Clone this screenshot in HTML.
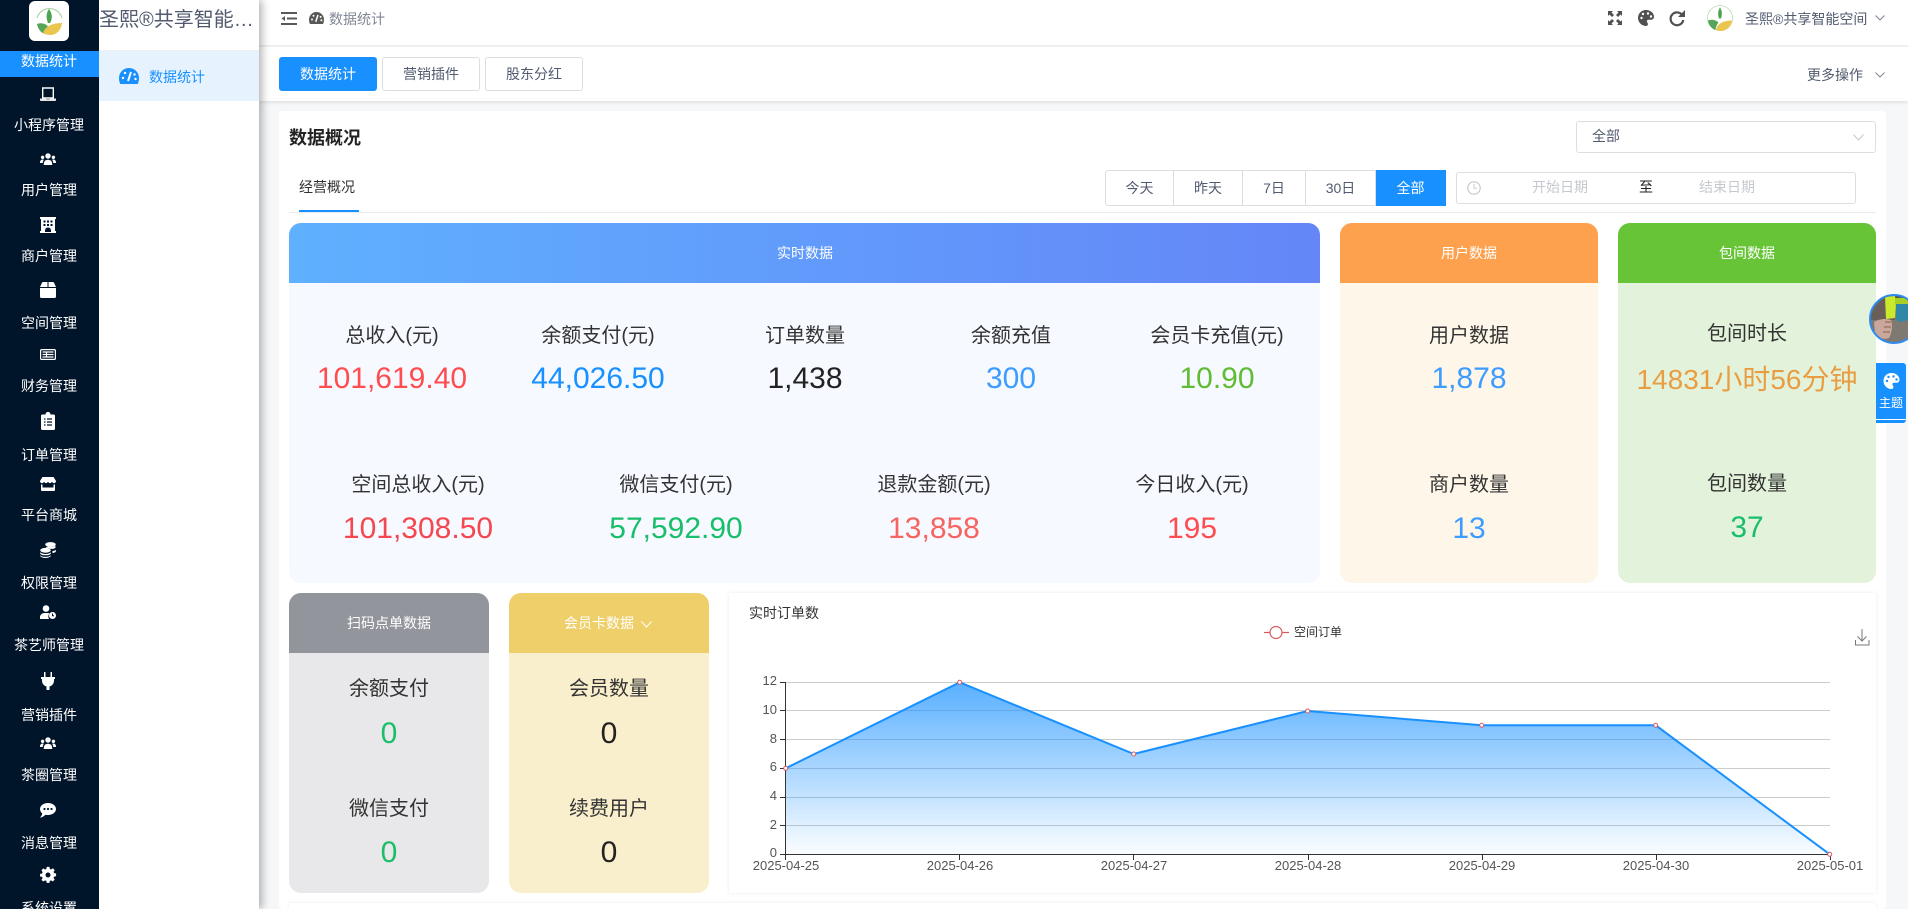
<!DOCTYPE html>
<html lang="zh-CN"><head><meta charset="utf-8"><title>数据统计</title>
<style>
*{box-sizing:border-box}
html,body{margin:0;padding:0;width:1908px;height:909px;overflow:hidden;background:#f5f7f9;font-family:"Liberation Sans","Noto Sans CJK SC",sans-serif;color:#333}
#w{position:relative;width:1908px;height:909px;overflow:hidden;contain:paint}
.a{position:absolute}
.c{position:absolute;width:400px;margin-left:-200px;height:50px;margin-top:-25px;line-height:50px;text-align:center;white-space:nowrap}
.l{font-size:20px;color:#333}
.v{font-size:30px}
.s{font-size:14px;color:#fff}
.h{font-size:14px;color:#fff}
svg{position:absolute;display:block;overflow:visible}
.card{position:absolute;border-radius:12px;overflow:hidden}
.card>div{position:absolute;left:0;top:0;width:100%;height:60px}
.btn{position:absolute;top:57px;height:34px;width:98px;line-height:32px;text-align:center;font-size:14px;border:1px solid #dcdee2;border-radius:3px;background:#fff;color:#515a6e}
.g{position:absolute;top:170px;height:36px;line-height:34px;text-align:center;font-size:14px;border:1px solid #dcdee2;border-left:0;color:#515a6e;background:#fff}
</style></head><body><div id="w">

<!-- main content -->
<div class="a" style="left:259px;top:0;width:1649px;height:46px;background:#fff;border-bottom:1px solid #f0f0f0"></div>
<div class="a" style="left:259px;top:47px;width:1649px;height:54px;background:#fff;box-shadow:0 1px 4px rgba(0,0,0,.12)"></div>
<div class="a" style="left:279px;top:111px;width:1607px;height:798px;background:#fff;border-radius:4px"></div>

<!-- secondary sidebar -->
<div class="a" style="left:99px;top:0;width:160px;height:909px;background:#fff;box-shadow:3px 0 8px rgba(0,0,0,.3)"></div>
<div class="a" style="left:99px;top:50px;width:160px;height:1px;background:#eee"></div>
<div class="a" style="left:99px;top:51px;width:160px;height:50px;background:#e6f3ff"></div>
<div class="a" style="left:99px;top:0;width:160px;height:50px;line-height:41px;font-size:20px;color:#515a6e;white-space:nowrap;overflow:hidden;text-overflow:ellipsis">圣熙®共享智能空间</div>
<svg style="left:119px;top:68px" width="20" height="16" viewBox="0 0 20 16"><path fill="#1890ff" d="M10 0A10 10 0 0 0 0 10c0 2.200.4 4.200 1.300 6h17.400c.9-1.800 1.300-3.800 1.300-6A10 10 0 0 0 10 0z"/><path stroke="#fff" stroke-width="2" d="M9 13l3-9"/><circle cx="4" cy="10" r="1.200" fill="#fff"/><circle cx="6" cy="5" r="1.200" fill="#fff"/><circle cx="15.500" cy="6.500" r="1.200" fill="#fff"/><circle cx="16.500" cy="11" r="1.200" fill="#fff"/></svg>
<div class="a" style="left:149px;top:67px;height:20px;line-height:20px;font-size:14px;color:#1890ff">数据统计</div>

<!-- primary sidebar -->
<div class="a" style="left:0;top:0;width:99px;height:909px;background:#00142a"></div>
<div class="a" style="left:29px;top:1px;width:40px;height:40px;background:#fff;border-radius:6px"></div>
<svg style="left:29px;top:1px" width="40" height="40" viewBox="0 0 40 40"><path d="M8 17a13 13 0 0 1 25 0" fill="none" stroke="#9ed19a" stroke-width="1"/><path d="M20 8c3 4 4 9 1 14h-2c-2-5-2-10 1-14z" fill="#4ba54f"/><path d="M8 23c5-2 10 0 12 4-2 2-3 4-4 6-4-1-7-5-8-10z" fill="#57a55a"/><path d="M14 32c2-7 10-10 19-10-1 8-6 12-12 12-3 0-5-1-7-2z" fill="#eac64f"/></svg>
<div class="a" style="left:0;top:51px;width:99px;height:26px;background:#1890ff"></div>

<div class="c s" style="left:49px;top:61px">数据统计</div>
<div class="c s" style="left:49px;top:125px">小程序管理</div>
<div class="c s" style="left:49px;top:190px">用户管理</div>
<div class="c s" style="left:49px;top:256px">商户管理</div>
<div class="c s" style="left:49px;top:323px">空间管理</div>
<div class="c s" style="left:49px;top:386px">财务管理</div>
<div class="c s" style="left:49px;top:455px">订单管理</div>
<div class="c s" style="left:49px;top:515px">平台商城</div>
<div class="c s" style="left:49px;top:583px">权限管理</div>
<div class="c s" style="left:49px;top:645px">茶艺师管理</div>
<div class="c s" style="left:49px;top:715px">营销插件</div>
<div class="c s" style="left:49px;top:775px">茶圈管理</div>
<div class="c s" style="left:49px;top:843px">消息管理</div>
<div class="c s" style="left:49px;top:908px">系统设置</div>

<!-- sidebar icons -->
<svg style="left:40px;top:87px" width="16" height="14" viewBox="0 0 16 14"><path d="M2.700 1h10.600v10H2.700z" fill="none" stroke="#fff" stroke-width="1.400"/><path d="M0 11.500h6l.6.8h2.800l.6-.8h6V13a1 1 0 0 1-1 1H1a1 1 0 0 1-1-1z" fill="#e6e6e6"/></svg>
<svg style="left:40px;top:153px" width="16" height="12" viewBox="0 0 16 12" fill="#fff"><circle cx="8" cy="3" r="2.700"/><path d="M3.800 12c-.3-3.600 1.400-5.300 4.200-5.300s4.500 1.700 4.200 5.300z"/><circle cx="2.600" cy="4.300" r="1.700"/><circle cx="13.400" cy="4.300" r="1.700"/><path d="M0 10c-.1-2 .8-3.500 2.600-3.500.6 0 1 .1 1.300.4C3 7.800 2.700 8.800 2.700 10zM16 10c.1-2-.8-3.500-2.600-3.500-.6 0-1 .1-1.300.4.900.9 1.200 1.900 1.200 3.100z"/></svg>
<svg style="left:40px;top:217px" width="16" height="16" viewBox="0 0 16 16"><path fill="#fff" d="M0 0h16v2h-1v12h1v2H0v-2h1V2H0z"/><path fill="#00142a" d="M3.500 3.500h2v2h-2zM7 3.500h2v2H7zM10.500 3.500h2v2h-2zM3.500 7h2v2h-2zM10.500 7h2v2h-2zM7 7h2v2H7zM5 14c0-2 1-3.500 3-3.500s3 1.500 3 3.500v1H5z"/></svg>
<svg style="left:40px;top:282px" width="16" height="16" viewBox="0 0 16 16" fill="#fff"><path d="M3.500 0h4v5H0L1.700 1.200C2 .4 2.700 0 3.500 0zM8.500 0h4c.8 0 1.500.4 1.800 1.200L16 5H8.500zM0 6h16v8.500a1.500 1.500 0 0 1-1.500 1.500h-13A1.500 1.500 0 0 1 0 14.500z"/></svg>
<svg style="left:40px;top:349px" width="16" height="11" viewBox="0 0 16 11"><rect x=".6" y=".6" width="14.800" height="9.800" rx="1.200" fill="#00142a" stroke="#fff" stroke-width="1.200"/><path d="M2.500 3h11M2.500 5.500h11M2.500 8h11M6.500 3v5" stroke="#fff" stroke-width="1.200" fill="none"/></svg>
<svg style="left:41px;top:412px" width="14" height="18" viewBox="0 0 14 18"><path fill="#fff" d="M1.500 2.500H4.500C4.500 1 5.500 0 7 0s2.500 1 2.500 2.500h3A1.500 1.500 0 0 1 14 4v12.500a1.500 1.500 0 0 1-1.500 1.500h-11A1.500 1.500 0 0 1 0 16.500V4a1.500 1.500 0 0 1 1.500-1.500z"/><path stroke="#00142a" stroke-width="1.300" d="M3 7h1.500M6 7h5M3 10h1.500M6 10h5M3 13h1.500M6 13h5"/></svg>
<svg style="left:40px;top:477px" width="16" height="14" viewBox="0 0 16 14" fill="#fff"><path d="M2.500 0h11L16 4c0 1.300-1 2.200-2 2.200S12.500 5.500 12 4.800c-.5.700-1.200 1.400-2 1.400S8.500 5.500 8 4.800c-.5.700-1.200 1.400-2 1.400S4.500 5.500 4 4.800C3.500 5.500 3 6.200 2 6.200S0 5.300 0 4z"/><path d="M1 7.500h1.500v3h11v-3H15V13a1 1 0 0 1-1 1H2a1 1 0 0 1-1-1z"/></svg>
<svg style="left:40px;top:542px" width="16" height="16" viewBox="0 0 16 16" fill="#fff"><ellipse cx="10.500" cy="2.500" rx="5.300" ry="2.400"/><path d="M5.500 5.500c1-.6 2.500-1 4-.8 2 .2 4 .2 6-1v2c-1 1-3 1.300-5 1.200-1.500-.7-3.500-1-5-1.400zM12.500 9c1.500-.2 2.500-.6 3.300-1.300v2C15 10.500 14 10.800 12.500 11z"/><ellipse cx="5.500" cy="8.300" rx="5.300" ry="2.400"/><path d="M.2 10.300c1 1.200 3 1.700 5.300 1.700s4.300-.5 5.300-1.700v1.400c-1 1.100-3 1.600-5.300 1.600S1.200 12.800.2 11.700zM.2 13.300c1 1.100 3 1.600 5.300 1.600s4.300-.5 5.300-1.600v.8c-1 1.200-3 1.900-5.300 1.900S1.200 15.300.2 14.100z"/></svg>
<svg style="left:40px;top:605px" width="16" height="14" viewBox="0 0 16 14"><circle cx="6" cy="3.500" r="3.300" fill="#fff"/><path d="M0 14v-1.800C0 9.800 2 8 4.300 8h3.400c.7 0 1.300.1 1.800.4A5 5 0 0 0 9 14z" fill="#fff"/><circle cx="12.500" cy="10.500" r="3.500" fill="#fff"/><path d="M12.500 8.500v2.200h1.500" stroke="#00142a" fill="none"/></svg>
<svg style="left:41px;top:672px" width="14" height="18" viewBox="0 0 14 18" fill="#fff"><path d="M3 0h1.500v5H3zM9.500 0H11v5H9.500zM0 5h14v2h-1v2a6 6 0 0 1-4.500 5.500V18h-3v-3.500A6 6 0 0 1 1 9V7H0z"/></svg>
<svg style="left:40px;top:737px" width="16" height="12" viewBox="0 0 16 12" fill="#fff"><circle cx="8" cy="3" r="2.700"/><path d="M3.800 12c-.3-3.600 1.400-5.300 4.200-5.300s4.500 1.700 4.200 5.300z"/><circle cx="2.600" cy="4.300" r="1.700"/><circle cx="13.400" cy="4.300" r="1.700"/><path d="M0 10c-.1-2 .8-3.500 2.600-3.500.6 0 1 .1 1.300.4C3 7.800 2.700 8.800 2.700 10zM16 10c.1-2-.8-3.500-2.600-3.500-.6 0-1 .1-1.300.4.900.9 1.200 1.900 1.200 3.100z"/></svg>
<svg style="left:40px;top:803px" width="16" height="15" viewBox="0 0 16 15"><path fill="#fff" d="M8 0c4.400 0 8 2.700 8 6s-3.600 6-8 6c-.9 0-1.800-.1-2.600-.3C4.300 12.700 2.500 14.500 0 14.500c1-1 2-2.300 2.300-4C.9 9.400 0 7.800 0 6c0-3.300 3.600-6 8-6z"/><circle cx="4.500" cy="6" r="1.100" fill="#00142a"/><circle cx="8" cy="6" r="1.100" fill="#00142a"/><circle cx="11.500" cy="6" r="1.100" fill="#00142a"/></svg>
<svg style="left:40px;top:867px" width="16" height="16" viewBox="0 0 16 16"><path fill="#fff" d="M6.500 0h3l.4 2.200 1.400.6 1.900-1.300 2.100 2.100-1.300 1.900.6 1.400 2.200.4v3l-2.200.4-.6 1.400 1.300 1.900-2.100 2.100-1.900-1.300-1.400.6-.4 2.200h-3l-.4-2.200-1.400-.6-1.900 1.300L.7 14.300 2 12.400l-.6-1.400L-.8 10.600v-3l2.200-.4.600-1.400L.7 3.700l2.100-2.100 1.900 1.300 1.400-.6z" transform="translate(.8 -.1) scale(.91)"/><circle cx="8" cy="8" r="2.500" fill="#00142a"/></svg>

<!-- header -->
<svg style="left:281px;top:12px" width="16" height="13" viewBox="0 0 16 13" fill="#595959"><path d="M0 0h16v2H0zM6 5.500h10v2H6zM0 11h16v2H0zM4 4v5L.5 6.500z"/></svg>
<svg style="left:309px;top:12px" width="15" height="12" viewBox="0 0 20 16"><path fill="#595959" d="M10 0A10 10 0 0 0 0 10c0 2.200.4 4.200 1.300 6h17.400c.9-1.800 1.300-3.800 1.300-6A10 10 0 0 0 10 0z"/><path stroke="#fff" stroke-width="2" d="M9 13l3-9"/><circle cx="4" cy="10" r="1.300" fill="#fff"/><circle cx="6" cy="5" r="1.300" fill="#fff"/><circle cx="15.500" cy="6.500" r="1.300" fill="#fff"/><circle cx="16.500" cy="11" r="1.300" fill="#fff"/></svg>
<div class="a" style="left:329px;top:9px;line-height:20px;font-size:14px;color:#808695">数据统计</div>

<svg style="left:1608px;top:11px" width="14" height="14" viewBox="0 0 14 14"><path fill="#515151" d="M0 0h5L3.500 1.500 6 4 4 6 1.500 3.500 0 5zM14 0v5l-1.500-1.500L10 6 8 4l2.500-2.500L9 0zM0 14V9l1.500 1.500L4 8l2 2-2.500 2.500L5 14zM14 14H9l1.500-1.500L8 10l2-2 2.500 2.500L14 9z"/></svg>
<svg style="left:1638px;top:10px" width="16" height="16" viewBox="0 0 16 16"><path fill="#515151" d="M8 0C3.600 0 0 3.400 0 7.800 0 12.300 3.500 16 7.900 16c1.300 0 2-.9 2-1.900 0-1.300-1-1.700-1-2.800 0-1 .8-1.500 1.800-1.500h2.300C14.800 9.800 16 8.600 16 6.900 16 3 12.400 0 8 0z"/><circle cx="3.500" cy="8" r="1.200" fill="#fff"/><circle cx="5" cy="4" r="1.200" fill="#fff"/><circle cx="10" cy="3.500" r="1.200" fill="#fff"/><circle cx="13" cy="6.500" r="1.200" fill="#fff"/></svg>
<svg style="left:1669px;top:10px" width="16" height="16" viewBox="0 0 16 16"><path fill="none" stroke="#515151" stroke-width="2.200" d="M13.300 5.200A6.400 6.400 0 1 0 14.300 10"/><path fill="#515151" d="M16 0v7H9z"/></svg>
<svg style="left:1707px;top:5px" width="26" height="26" viewBox="0 0 26 26"><circle cx="13" cy="13" r="12.500" fill="#fff" stroke="#b9ddb4" stroke-width=".8"/><path d="M13 2.500c2 3 2.500 6.500 1 11h-2c-1.500-4-1-8 1-11z" fill="#4ba54f"/><path d="M1 15.500c4-1.500 8-.5 10.500 2-1.500 2-2.500 4-3 7.500C4.500 23.500 1.500 20 1 15.500z" fill="#57a55a"/><path d="M9 25c1-6 7-9.500 16-9.500C24.500 22 19 26 13.500 26 12 26 10.500 25.700 9 25z" fill="#eac64f"/></svg>
<div class="a" style="left:1745px;top:9px;line-height:20px;font-size:14px;color:#515a6e;white-space:nowrap">圣熙®共享智能空间</div>
<svg style="left:1875px;top:15px" width="10" height="6" viewBox="0 0 10 6"><path d="M.5.500L5 5 9.500.5" fill="none" stroke="#808695"/></svg>

<!-- tabs -->
<div class="btn" style="left:279px;background:#1890ff;color:#fff;border-color:#1890ff">数据统计</div>
<div class="btn" style="left:382px">营销插件</div>
<div class="btn" style="left:485px">股东分红</div>
<div class="a" style="left:1807px;top:65px;line-height:20px;font-size:14px;color:#515a6e">更多操作</div>
<svg style="left:1875px;top:72px" width="10" height="6" viewBox="0 0 10 6"><path d="M.5.500L5 5 9.500.5" fill="none" stroke="#808695"/></svg>

<!-- overview -->
<div class="a" style="left:289px;top:125px;line-height:26px;font-size:18px;font-weight:700;color:#222">数据概况</div>
<div class="a" style="left:1576px;top:121px;width:300px;height:32px;border:1px solid #dcdee2;border-radius:3px;background:#fff"></div>
<div class="a" style="left:1592px;top:126px;line-height:20px;font-size:14px;color:#515a6e">全部</div>
<svg style="left:1853px;top:134px" width="11" height="7" viewBox="0 0 11 7"><path d="M.5.500L5.500 6 10.500.5" fill="none" stroke="#c5c8ce"/></svg>

<div class="a" style="left:299px;top:177px;line-height:20px;font-size:14px;color:#333">经营概况</div>
<div class="a" style="left:289px;top:212px;width:1587px;height:1px;background:#e8eaec"></div>
<div class="a" style="left:299px;top:210px;width:60px;height:2px;background:#1890ff"></div>

<div class="g" style="left:1105px;width:69px;border-left:1px solid #dcdee2;border-radius:3px 0 0 3px">今天</div>
<div class="g" style="left:1174px;width:69px">昨天</div>
<div class="g" style="left:1243px;width:63px">7日</div>
<div class="g" style="left:1306px;width:70px">30日</div>
<div class="g" style="left:1376px;width:70px;background:#1890ff;color:#fff;border-color:#1890ff">全部</div>

<div class="a" style="left:1456px;top:172px;width:400px;height:32px;border:1px solid #dcdee2;border-radius:3px;background:#fff"></div>
<svg style="left:1467px;top:181px" width="14" height="14" viewBox="0 0 14 14"><circle cx="7" cy="7" r="6.200" fill="none" stroke="#c5c8ce" stroke-width="1.200"/><path d="M7 3v4.300h3" fill="none" stroke="#c5c8ce"/></svg>
<div class="c" style="left:1560px;top:187px;font-size:14px;color:#c5c8ce">开始日期</div>
<div class="c" style="left:1646px;top:187px;font-size:14px;color:#222">至</div>
<div class="c" style="left:1727px;top:187px;font-size:14px;color:#c5c8ce">结束日期</div>

<!-- cards -->
<div class="card" style="left:289px;top:223px;width:1031px;height:360px;background:#f6f9ff"><div style="background:linear-gradient(90deg,#5fb0ff,#6486f7)"></div></div>
<div class="card" style="left:1340px;top:223px;width:258px;height:360px;background:#fef6e8"><div style="background:#fea14e"></div></div>
<div class="card" style="left:1618px;top:223px;width:258px;height:360px;background:#e3f3db"><div style="background:#67c437"></div></div>
<div class="card" style="left:289px;top:593px;width:200px;height:300px;background:#e8e8ea"><div style="background:#93959c"></div></div>
<div class="card" style="left:509px;top:593px;width:200px;height:300px;background:#faefcc"><div style="background:#eecf6a"></div></div>

<div class="c h" style="left:805px;top:253px">实时数据</div>
<div class="c h" style="left:1469px;top:253px">用户数据</div>
<div class="c h" style="left:1747px;top:253px">包间数据</div>
<div class="c h" style="left:389px;top:623px">扫码点单数据</div>
<div class="c h" style="left:599px;top:623px">会员卡数据</div>
<svg style="left:641px;top:621px" width="11" height="7" viewBox="0 0 11 7"><path d="M.5.500L5.500 6 10.500.5" fill="none" stroke="#fff"/></svg>

<div class="c l" style="left:392px;top:336px">总收入(元)</div>
<div class="c l" style="left:598px;top:336px">余额支付(元)</div>
<div class="c l" style="left:805px;top:336px">订单数量</div>
<div class="c l" style="left:1011px;top:336px">余额充值</div>
<div class="c l" style="left:1217px;top:336px">会员卡充值(元)</div>
<div class="c v" style="left:392px;top:379px;color:#ff4d4f">101,619.40</div>
<div class="c v" style="left:598px;top:379px;color:#1890ff">44,026.50</div>
<div class="c v" style="left:805px;top:379px;color:#222">1,438</div>
<div class="c v" style="left:1011px;top:379px;color:#3c9cff">300</div>
<div class="c v" style="left:1217px;top:379px;color:#5fbc33">10.90</div>

<div class="c l" style="left:418px;top:485px">空间总收入(元)</div>
<div class="c l" style="left:676px;top:485px">微信支付(元)</div>
<div class="c l" style="left:934px;top:485px">退款金额(元)</div>
<div class="c l" style="left:1192px;top:485px">今日收入(元)</div>
<div class="c v" style="left:418px;top:529px;color:#f5474f">101,308.50</div>
<div class="c v" style="left:676px;top:529px;color:#19be6b">57,592.90</div>
<div class="c v" style="left:934px;top:529px;color:#f76560">13,858</div>
<div class="c v" style="left:1192px;top:529px;color:#ff4d4f">195</div>

<div class="c l" style="left:1469px;top:336px">用户数据</div>
<div class="c v" style="left:1469px;top:379px;color:#3c9cff">1,878</div>
<div class="c l" style="left:1469px;top:485px">商户数量</div>
<div class="c v" style="left:1469px;top:529px;color:#3c9cff">13</div>

<div class="c l" style="left:1747px;top:334px">包间时长</div>
<div class="c" style="left:1747px;top:380px;font-size:28px;color:#e99d42">14831小时56分钟</div>
<div class="c l" style="left:1747px;top:484px">包间数量</div>
<div class="c v" style="left:1747px;top:528px;color:#19be6b">37</div>

<div class="c l" style="left:389px;top:689px">余额支付</div>
<div class="c v" style="left:389px;top:734px;color:#19be6b">0</div>
<div class="c l" style="left:389px;top:809px">微信支付</div>
<div class="c v" style="left:389px;top:853px;color:#19be6b">0</div>
<div class="c l" style="left:609px;top:689px">会员数量</div>
<div class="c v" style="left:609px;top:734px;color:#222">0</div>
<div class="c l" style="left:609px;top:809px">续费用户</div>
<div class="c v" style="left:609px;top:853px;color:#222">0</div>

<!-- chart card -->
<div class="a" style="left:729px;top:593px;width:1147px;height:300px;background:#fff;box-shadow:0 0 4px rgba(0,0,0,.08)"></div>
<div class="a" style="left:289px;top:903px;width:1587px;height:6px;background:#fff;box-shadow:0 0 4px rgba(0,0,0,.08)"></div>
<div class="a" style="left:749px;top:603px;line-height:20px;font-size:14px;color:#333">实时订单数</div>

<svg style="left:0;top:0;overflow:hidden" width="1908" height="909" viewBox="0 0 1908 909">
<defs><linearGradient id="ag" x1="0" y1="682" x2="0" y2="854" gradientUnits="userSpaceOnUse"><stop offset="0" stop-color="#1890ff" stop-opacity=".72"/><stop offset="1" stop-color="#1890ff" stop-opacity=".02"/></linearGradient></defs>
<g stroke="#ccc" stroke-width="1"><path d="M786 682.500H1830M786 710.500H1830M786 739.500H1830M786 768.500H1830M786 797.500H1830M786 825.500H1830"/></g>
<path d="M785.700 768.300L959.700 682.300 1133.700 754 1307.700 711 1481.700 725.300 1655.700 725.300 1829.700 854.300V854.300H785.700z" fill="url(#ag)"/>
<path d="M785.700 768.300L959.700 682.300 1133.700 754 1307.700 711 1481.700 725.300 1655.700 725.300 1829.700 854.300" fill="none" stroke="#1890ff" stroke-width="2"/>
<path d="M785.500 682V860M780 682.500h6M780 710.500h6M780 739.500h6M780 768.500h6M780 797.500h6M780 825.500h6M780 854.500h1050M959.500 854v6M1133.500 854v6M1308.500 854v6M1482.500 854v6M1656.500 854v6M1830.500 854v6" stroke="#333" stroke-width="1" fill="none"/>
<g fill="#fff" stroke="#d9595f" stroke-width="1"><circle cx="785.700" cy="768.300" r="2"/><circle cx="959.700" cy="682.300" r="2"/><circle cx="1133.700" cy="754" r="2"/><circle cx="1307.700" cy="711" r="2"/><circle cx="1481.700" cy="725.300" r="2"/><circle cx="1655.700" cy="725.300" r="2"/><circle cx="1829.700" cy="854.300" r="2"/></g>
<g font-family="Liberation Sans,sans-serif" font-size="13" fill="#555" text-anchor="end"><text x="777" y="685">12</text><text x="777" y="714">10</text><text x="777" y="743">8</text><text x="777" y="771">6</text><text x="777" y="800">4</text><text x="777" y="829">2</text><text x="777" y="857">0</text></g>
<g font-family="Liberation Sans,sans-serif" font-size="13" fill="#555" text-anchor="middle"><text x="786" y="870">2025-04-25</text><text x="960" y="870">2025-04-26</text><text x="1134" y="870">2025-04-27</text><text x="1308" y="870">2025-04-28</text><text x="1482" y="870">2025-04-29</text><text x="1656" y="870">2025-04-30</text><text x="1830" y="870">2025-05-01</text></g>
<path d="M1264 632.500h25" stroke="#d9595f" stroke-width="1.200"/><circle cx="1276" cy="632.500" r="6" fill="#fff" stroke="#d9595f" stroke-width="1.200"/>
<text x="1294" y="636" font-family="Liberation Sans,Noto Sans CJK SC,sans-serif" font-size="12" fill="#333">空间订单</text>
<path d="M1862 629v12M1857.500 636.500l4.500 4.500 4.500-4.500M1855.500 640v5h13.500v-5" fill="none" stroke="#777" stroke-width="1"/>
</svg>

<!-- floating -->
<svg style="left:1869px;top:294px" width="50" height="50" viewBox="0 0 50 50"><defs><clipPath id="cp"><circle cx="25" cy="25" r="24"/></clipPath></defs><g clip-path="url(#cp)"><rect width="50" height="50" fill="#7e7a72"/><rect width="26" height="26" fill="#6a5f58"/><rect x="26" y="0" width="24" height="6" fill="#55564f"/><path d="M16 3l10-1 1 8-1 14-9 1z" fill="#c9ea2a"/><path d="M26 4h18v7H26z" fill="#a8cf23"/><path d="M27 10h18v15l-15 3-3-3z" fill="#2f88a8"/><path d="M5 28c5-3 12-4 17-2 2 5 1 13-2 18-6 2-11 0-14-5z" fill="#c9a79a"/><path d="M16 28h6M15 33h7M14 38h7" stroke="#8a5f50" stroke-width="1"/></g><circle cx="25" cy="25" r="24" fill="none" stroke="#2f8bf0" stroke-width="2"/></svg>
<div class="a" style="left:1876px;top:363px;width:30px;height:60px;background:#1890ff;border-radius:0 3px 3px 0"></div>
<div class="a" style="left:1876px;top:419px;width:30px;height:1px;background:#fff"></div>
<svg style="left:1883px;top:373px" width="17" height="16" viewBox="0 0 16 16"><path fill="#fff" d="M8 0C3.600 0 0 3.400 0 7.800 0 12.300 3.500 16 7.900 16c1.300 0 2-.9 2-1.900 0-1.300-1-1.700-1-2.800 0-1 .8-1.500 1.800-1.500h2.300C14.800 9.800 16 8.600 16 6.900 16 3 12.400 0 8 0z"/><circle cx="3.500" cy="8" r="1.200" fill="#1890ff"/><circle cx="5" cy="4" r="1.200" fill="#1890ff"/><circle cx="10" cy="3.500" r="1.200" fill="#1890ff"/><circle cx="13" cy="6.500" r="1.200" fill="#1890ff"/></svg>
<div class="c" style="left:1891px;top:403px;font-size:12px;color:#fff">主题</div>

</div></body></html>
